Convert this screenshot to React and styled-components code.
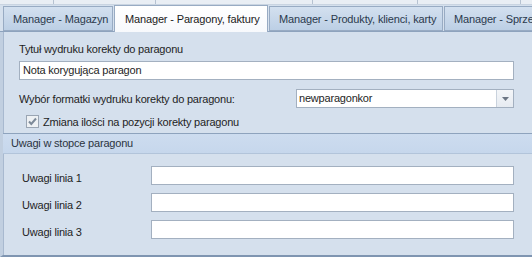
import React from 'react'
import styled, { createGlobalStyle } from 'styled-components'

const Global = createGlobalStyle`
  html, body { margin: 0; padding: 0; }
  body {
    font-family: "Liberation Sans", Arial, sans-serif;
    font-size: 11px;
    color: #1e1e1e;
  }
`

const tabs = [
  { label: 'Manager - Magazyn', width: 110 },
  { label: 'Manager - Paragony, faktury', width: 154, active: true },
  { label: 'Manager - Produkty, klienci, karty', width: 174 },
  { label: 'Manager - Sprzedaż', width: 110 },
]

function CheckMark() {
  return (
    <svg width="13" height="13" viewBox="0 0 13 13">
      <rect x="0.5" y="0.5" width="12" height="12" fill="#eef1f4" stroke="#9aa5b3" />
      <path d="M3 6.5 L5.3 9 L10 3.5" fill="none" stroke="#7d8a99" strokeWidth="2" />
    </svg>
  )
}

function App() {
  return (
    <Frame>
      <Global />
      <TopStrip>
        <Divider style={{ left: 53 }} />
        <Divider style={{ left: 155 }} />
        <Divider style={{ left: 312 }} />
        <Divider style={{ left: 417 }} />
        <Divider style={{ left: 520 }} />
      </TopStrip>
      <TabBar>
        {tabs.map(t => (
          <Tab key={t.label} $active={t.active} $width={t.width}>{t.label}</Tab>
        ))}
      </TabBar>
      <Body>
        <Section>
          <Label>Tytuł wydruku korekty do paragonu</Label>
          <TextBox $width={495}>Nota korygująca paragon</TextBox>
          <SelectRow>
            <Label>Wybór formatki wydruku korekty do paragonu:</Label>
            <Combo>
              <ComboText>newparagonkor</ComboText>
              <ComboButton>
                <svg width="7" height="4" viewBox="0 0 7 4"><path d="M0 0 H7 L3.5 4 Z" fill="#6c7684" /></svg>
              </ComboButton>
            </Combo>
          </SelectRow>
          <CheckRow>
            <CheckMark />
            <span>Zmiana ilości na pozycji korekty paragonu</span>
          </CheckRow>
        </Section>
        <GroupHeader>Uwagi w stopce paragonu</GroupHeader>
        <Notes>
          {[1, 2, 3].map(n => (
            <NoteRow key={n}>
              <NoteLabel>Uwagi linia {n}</NoteLabel>
              <TextBox $width={363} />
            </NoteRow>
          ))}
        </Notes>
      </Body>
    </Frame>
  )
}

export default App

const Frame = styled.div`
  width: 532px;
  height: 257px;
  overflow: hidden;
  background: #d5e0ed;
  display: flex;
  flex-direction: column;
`

const TopStrip = styled.div`
  position: relative;
  height: 5px;
  background: #e9eef4;
  border-bottom: 1px solid #c9d4e1;
  box-sizing: border-box;
`

const Divider = styled.div`
  position: absolute;
  top: 0;
  width: 1px;
  height: 4px;
  background: #b6c2d1;
`

const TabBar = styled.div`
  height: 27px;
  display: flex;
  align-items: flex-end;
  padding-left: 3px;
  background: #d5e0ed;
  border-bottom: 1px solid #8ea3bd;
  box-sizing: border-box;
`

const Tab = styled.div`
  width: ${p => p.$width}px;
  flex: none;
  box-sizing: border-box;
  height: ${p => (p.$active ? 27 : 25)}px;
  margin-bottom: ${p => (p.$active ? -1 : 0)}px;
  margin-right: 1px;
  padding-left: ${p => (p.$active ? 10 : 9)}px;
  padding-top: ${p => (p.$active ? 7 : 6)}px;
  white-space: nowrap;
  overflow: hidden;
  color: #2a3440;
  letter-spacing: -0.15px;
  border: 1px solid #98abc3;
  border-bottom: ${p => (p.$active ? 'none' : '1px solid #98abc3')};
  background: ${p =>
    p.$active
      ? 'linear-gradient(#ffffff, #f7f9fc)'
      : 'linear-gradient(#d3e0ef, #bccfe5)'};
  color: ${p => (p.$active ? '#1a1a1a' : '#2b3a4d')};
`

const Body = styled.div`
  flex: 1;
  display: flex;
  flex-direction: column;
  border-left: 3px solid #c1cfe0;
  box-shadow: inset 1px 0 0 #a8b9cf;
  border-bottom: 2px solid #7f95b1;
`

const Section = styled.div`
  padding: 10px 0 5px 16px;
  display: flex;
  flex-direction: column;
`

const Label = styled.div`
  height: 14px;
  line-height: 14px;
  white-space: nowrap;
  letter-spacing: -0.2px;
`

const TextBox = styled.div`
  width: ${p => p.$width}px;
  height: 19px;
  box-sizing: border-box;
  border: 1px solid #a3b0c0;
  background: #fff;
  padding-left: 3px;
  line-height: 17px;
  margin-top: 5px;
  letter-spacing: -0.2px;
  flex: none;
`

const SelectRow = styled.div`
  display: flex;
  align-items: center;
  justify-content: space-between;
  width: 495px;
  margin-top: 9px;
`

const Combo = styled.div`
  width: 218px;
  height: 19px;
  box-sizing: border-box;
  border: 1px solid #a3b0c0;
  background: #fff;
  display: flex;
`

const ComboText = styled.div`
  flex: 1;
  padding-left: 2px;
  line-height: 17px;
  letter-spacing: -0.2px;
`

const ComboButton = styled.div`
  width: 16px;
  border-left: 1px solid #c9d2dd;
  background: linear-gradient(#f4f6f9, #e6ebf1);
  display: flex;
  align-items: center;
  justify-content: center;
`

const CheckRow = styled.div`
  display: flex;
  align-items: center;
  gap: 4px;
  margin-top: 7px;
  margin-left: 7px;
  height: 13px;
  letter-spacing: -0.2px;
  white-space: nowrap;
`

const GroupHeader = styled.div`
  height: 21px;
  box-sizing: border-box;
  border-top: 1px solid #8ea3bd;
  border-bottom: 1px solid #b2c4da;
  background: linear-gradient(#cddcef, #c6d7ec);
  padding-left: 8px;
  line-height: 19px;
  color: #2b3440;
  letter-spacing: -0.2px;
`

const Notes = styled.div`
  padding: 12px 0 0 19px;
  display: flex;
  flex-direction: column;
  gap: 8px;
`

const NoteRow = styled.div`
  display: flex;
  align-items: center;
  & > div:last-child { margin-top: 0; }
`

const NoteLabel = styled.div`
  width: 129px;
  padding-top: 5px;
  letter-spacing: -0.2px;
`
